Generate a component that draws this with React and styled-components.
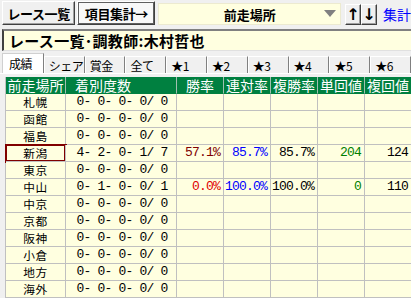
import styled, { createGlobalStyle, css } from "styled-components";

const GlobalStyle = createGlobalStyle`
  body {
    margin: 0;
    background: #f0f0f0;
    font-family: "Noto Sans CJK JP", sans-serif;
    overflow: hidden;
  }
`;

const rows = [
  { place: "札幌", record: "0- 0- 0- 0/ 0" },
  { place: "函館", record: "0- 0- 0- 0/ 0" },
  { place: "福島", record: "0- 0- 0- 0/ 0" },
  {
    place: "新潟",
    record: "4- 2- 0- 1/ 7",
    selected: true,
    win: "57.1%",
    winColor: "#800000",
    quinella: "85.7%",
    show: "85.7%",
    winRet: "204",
    showRet: "124",
  },
  { place: "東京", record: "0- 0- 0- 0/ 0" },
  {
    place: "中山",
    record: "0- 1- 0- 0/ 1",
    win: "0.0%",
    winColor: "#e00000",
    quinella: "100.0%",
    show: "100.0%",
    winRet: "0",
    showRet: "110",
  },
  { place: "中京", record: "0- 0- 0- 0/ 0" },
  { place: "京都", record: "0- 0- 0- 0/ 0" },
  { place: "阪神", record: "0- 0- 0- 0/ 0" },
  { place: "小倉", record: "0- 0- 0- 0/ 0" },
  { place: "地方", record: "0- 0- 0- 0/ 0" },
  { place: "海外", record: "0- 0- 0- 0/ 0" },
];

const tabs = ["成績", "シェア", "賞金", "全て", "★1", "★2", "★3", "★4", "★5", "★6"];

const App = () => {
  return (
    <Window>
      <GlobalStyle />
      <Toolbar>
        <RaisedButton $width={75}>レース一覧</RaisedButton>
        <RaisedButton $width={80} $focused>
          項目集計→
        </RaisedButton>
        <Combo>
          <ComboText>前走場所</ComboText>
          <ComboArrow />
        </Combo>
        <ArrowGroup>
          <ArrowButton>↑</ArrowButton>
          <ArrowButton>↓</ArrowButton>
        </ArrowGroup>
        <LinkText>集計</LinkText>
      </Toolbar>

      <TitleBox>レース一覧･調教師:木村哲也</TitleBox>

      <TabBar>
        {tabs.map((t, i) => (
          <Tab key={t} $active={i === 0}>
            {t}
          </Tab>
        ))}
      </TabBar>

      <Grid>
        <HeadCell>前走場所</HeadCell>
        <HeadCell $left>着別度数</HeadCell>
        <HeadCell>勝率</HeadCell>
        <HeadCell>連対率</HeadCell>
        <HeadCell>複勝率</HeadCell>
        <HeadCell>単回値</HeadCell>
        <HeadCell>複回値</HeadCell>
        {rows.map((r) => (
          <Row key={r.place} r={r} />
        ))}
      </Grid>
    </Window>
  );
};

const Row = ({ r }) => (
  <>
    <PlaceCell $selected={r.selected}>{r.place}</PlaceCell>
    <RecordCell>{r.record}</RecordCell>
    <NumCell $color={r.winColor}>{r.win}</NumCell>
    <NumCell $color="#0000ff">{r.quinella}</NumCell>
    <NumCell>{r.show}</NumCell>
    <NumCell $color="#008000">{r.winRet}</NumCell>
    <NumCell>{r.showRet}</NumCell>
  </>
);

export default App;

const Window = styled.div`
  width: 411px;
  height: 298px;
  overflow: hidden;
  display: flex;
  flex-direction: column;
`;

const Toolbar = styled.div`
  height: 27px;
  display: flex;
  align-items: flex-start;
  padding: 1px 0 0 2px;
  box-sizing: border-box;
  white-space: nowrap;
`;

const raised = css`
  box-sizing: border-box;
  background: #f0f0f0;
  border-top: 1px solid #ffffff;
  border-left: 1px solid #ffffff;
  border-right: 1px solid #404040;
  border-bottom: 1px solid #404040;
  box-shadow: inset -1px -1px 0 #a0a0a0;
`;

const RaisedButton = styled.div`
  ${raised};
  width: ${(p) => p.$width}px;
  height: 24px;
  margin-right: 2px;
  display: flex;
  align-items: center;
  justify-content: center;
  font-size: 13px;
  font-weight: bold;
  color: #000;
  letter-spacing: -0.4px;
  ${(p) =>
    p.$focused &&
    css`
      background: #f8f8f8;
      outline: 1px solid #606060;
      outline-offset: -2px;
    `}
`;

const Combo = styled.div`
  width: 187px;
  height: 22px;
  margin: 2px 0 0 1px;
  box-sizing: border-box;
  background: #ffffe0;
  border: 1px solid #ecead0;
  display: flex;
  align-items: center;
`;

const ComboText = styled.span`
  flex: 1;
  text-align: center;
  font-size: 13px;
  font-weight: bold;
  padding-left: 16px;
`;

const ComboArrow = styled.span`
  width: 0;
  height: 0;
  margin: 0 4px 2px 0;
  border-left: 6px solid transparent;
  border-right: 6px solid transparent;
  border-top: 7px solid #808080;
`;

const ArrowGroup = styled.div`
  display: flex;
  margin: 3px 0 0 4px;
`;

const ArrowButton = styled.div`
  ${raised};
  width: 16px;
  height: 21px;
  display: flex;
  align-items: center;
  justify-content: center;
  font-family: "DejaVu Sans", sans-serif;
  font-size: 16px;
  font-weight: bold;
`;

const LinkText = styled.span`
  margin: 4px 0 0 6px;
  color: #0000ff;
  font-size: 14px;
  line-height: 18px;
`;

const TitleBox = styled.div`
  margin: 2px 0 0 2px;
  height: 22px;
  box-sizing: border-box;
  background: #ffffe0;
  border-top: 2px solid #808080;
  border-left: 2px solid #404040;
  border-bottom: 1px solid #e0e0e0;
  padding-left: 5px;
  font-size: 15px;
  font-weight: bold;
  line-height: 19px;
  white-space: nowrap;
  letter-spacing: 0.3px;
`;

const TabBar = styled.div`
  margin-top: 3px;
  height: 20px;
  display: flex;
  align-items: flex-end;
  padding-left: 2px;
  border-bottom: 1px solid #ffffff;
  box-sizing: border-box;
`;

const Tab = styled.div`
  box-sizing: border-box;
  width: ${(p) => (p.$active ? 43 : 42)}px;
  height: ${(p) => (p.$active ? 20 : 17)}px;
  background: ${(p) => (p.$active ? "#ffffff" : "#f0f0f0")};
  border-top: 1px solid ${(p) => (p.$active ? "#d0d0d0" : "#ffffff")};
  border-left: 1px solid ${(p) => (p.$active ? "#d0d0d0" : "#ffffff")};
  border-right: 1px solid #808080;
  display: flex;
  align-items: center;
  padding-left: ${(p) => (p.$active ? 6 : 4)}px;
  font-size: 12px;
  letter-spacing: -0.5px;
  white-space: nowrap;
`;

const Grid = styled.div`
  margin: 3px 0 0 5px;
  display: grid;
  grid-template-columns: 60px 111px 47px 47px 47px 47px 47px;
  grid-auto-rows: 17px;
  border-left: 1px solid #c0c0c0;
`;

const cell = css`
  box-sizing: border-box;
  border-right: 1px solid #c0c0c0;
  border-bottom: 1px solid #c0c0c0;
  white-space: nowrap;
  line-height: 16px;
`;

const HeadCell = styled.div`
  ${cell};
  background: #008040;
  color: #ffffff;
  font-size: 14px;
  text-align: ${(p) => (p.$left ? "left" : "center")};
  padding-left: ${(p) => (p.$left ? 9 : 0)}px;
  border-right-color: #a0c0b0;
  border-bottom-color: #008040;
`;

const PlaceCell = styled.div`
  ${cell};
  background: #ffffe0;
  font-size: 11.7px;
  letter-spacing: 0.6px;
  text-align: center;
  ${(p) =>
    p.$selected &&
    css`
      box-shadow: inset 0 0 0 1px #800000, 0 0 0 1px #800000;
    `}
`;

const RecordCell = styled.div`
  ${cell};
  background: #ffffe0;
  font-family: "Liberation Mono", monospace;
  font-size: 13px;
  letter-spacing: -0.8px;
  text-align: center;
  padding-left: 2px;
`;

const NumCell = styled.div`
  ${cell};
  background: #ffffe0;
  font-family: "Liberation Mono", monospace;
  font-size: 13px;
  letter-spacing: -0.8px;
  text-align: right;
  padding-right: 3px;
  color: ${(p) => p.$color || "#000000"};
`;
